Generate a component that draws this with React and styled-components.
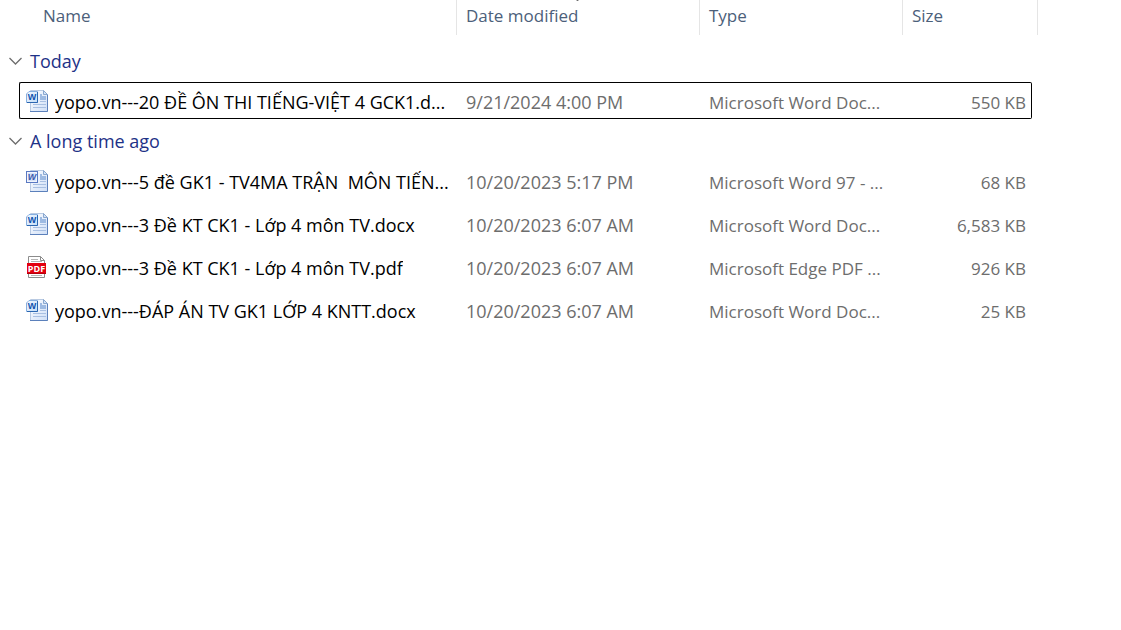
import { useState } from 'react'
import styled, { createGlobalStyle } from 'styled-components'

const columns = [
  { id: 'date', label: 'Date modified', sorted: true },
  { id: 'type', label: 'Type' },
]

const groups = [
  {
    name: 'Today',
    files: [
      { icon: 'docx', name: 'yopo.vn---20 ĐỀ ÔN THI TIẾNG-VIỆT 4 GCK1.d...', date: '9/21/2024 4:00 PM', type: 'Microsoft Word Doc...', size: '550 KB', focused: true },
    ],
  },
  {
    name: 'A long time ago',
    files: [
      { icon: 'doc', name: 'yopo.vn---5 đề GK1 - TV4MA TRẬN  MÔN TIẾN...', date: '10/20/2023 5:17 PM', type: 'Microsoft Word 97 - ...', size: '68 KB' },
      { icon: 'docx', name: 'yopo.vn---3 Đề KT CK1 - Lớp 4 môn TV.docx', date: '10/20/2023 6:07 AM', type: 'Microsoft Word Doc...', size: '6,583 KB' },
      { icon: 'pdf', name: 'yopo.vn---3 Đề KT CK1 - Lớp 4 môn TV.pdf', date: '10/20/2023 6:07 AM', type: 'Microsoft Edge PDF ...', size: '926 KB' },
      { icon: 'docx', name: 'yopo.vn---ĐÁP ÁN TV GK1 LỚP 4 KNTT.docx', date: '10/20/2023 6:07 AM', type: 'Microsoft Word Doc...', size: '25 KB' },
    ],
  },
]

function WordIcon({ old }) {
  return (
    <FileSvg viewBox="0 0 23 23" aria-hidden="true">
      <defs>
        <linearGradient id="page" x1="0" y1="0" x2="1" y2="1">
          <stop offset="0" stopColor="#ffffff" />
          <stop offset="1" stopColor="#cfdff7" />
        </linearGradient>
        <linearGradient id="badge" x1="0" y1="0" x2="1" y2="1">
          <stop offset="0" stopColor="#f4f9ff" />
          <stop offset="1" stopColor="#c3ddf8" />
        </linearGradient>
      </defs>
      <path d="M4.500 .5h13l4 4v17h-17z" fill="url(#page)" stroke="#b9cae2" />
      <path d="M21.500 4.500v17H4" fill="none" stroke="#5b80bb" />
      <path d="M17.500 .5v4h4z" fill="#d4e3f6" stroke="#8aa8d0" />
      <path d="M14 4h2v2h4v4h-6z" fill="#9dbae2" />
      <path d="M14 11.500h6M7 14.500h13M7 17.500h13" stroke="#a9c0e2" />
      {old ? (
        <>
          <rect x="0.5" y="1.5" width="11" height="11" fill="#f1f5fd" stroke="#5a79c2" />
          <rect x="2" y="3" width="8" height="8" fill="#d8e2f7" />
        </>
      ) : (
        <>
          <path d="M3 1.500h8.500v11H.5V4z" fill="url(#badge)" stroke="#86afe0" />
          <path d="M11.500 2v10.500H1" fill="none" stroke="#2c67b1" />
        </>
      )}
      <IconLetter x="6" y="10" fill={old ? '#3c5cae' : '#0f52ad'} $italic={old}>W</IconLetter>
    </FileSvg>
  )
}

function PdfIcon() {
  return (
    <FileSvg viewBox="0 0 23 23" aria-hidden="true">
      <path d="M2.500 8V.5h12l4 4v17h-16V8" fill="#fff" stroke="#8c8c8c" />
      <path d="M14.500 .5v4h4" fill="none" stroke="#8c8c8c" />
      <path d="M5 3.500h7M5 5.500h11M5 19.500h11" stroke="#b5b5b5" />
      <rect x="1" y="7" width="19" height="11" fill="#e3000f" />
      <path d="M1 17.500h19" stroke="#b4000c" />
      <PdfLetters x="10.500" y="16">PDF</PdfLetters>
    </FileSvg>
  )
}

function FileIcon({ kind }) {
  if (kind === 'pdf') {
    return <PdfIcon />
  }
  return <WordIcon old={kind === 'doc'} />
}

function Group({ group }) {
  const [open, setOpen] = useState(true)

  return (
    <tbody>
      <tr>
        <GroupCell colSpan={7} scope="rowgroup">
          <GroupButton type="button" aria-expanded={open} onClick={() => setOpen(!open)}>
            <Chevron viewBox="0 0 13 8" $open={open} aria-hidden="true">
              <path d="M.5 1l6 6 6-6" />
            </Chevron>
            {group.name}
          </GroupButton>
        </GroupCell>
      </tr>
      {open && group.files.map(file => (
        <FileRow key={file.name} $focused={file.focused}>
          <Gutter />
          <Cell>
            <FileName>
              <FileIcon kind={file.icon} />
              <span>{file.name}</span>
            </FileName>
          </Cell>
          <Cell><Detail $large>{file.date}</Detail></Cell>
          <Cell><Detail>{file.type}</Detail></Cell>
          <Cell><Detail $right>{file.size}</Detail></Cell>
          <Gutter />
          <Gutter />
        </FileRow>
      ))}
    </tbody>
  )
}

export default function App() {
  return (
    <>
      <GlobalStyle />
      <FileTable>
        <colgroup>
          <Col $width={19} />
          <Col />
          <Col $width={243} />
          <Col $width={203} />
          <Col $width={129} />
          <Col $width={6} />
          <Col $width={83} />
        </colgroup>
        <thead>
          <tr>
            <HeadCell colSpan={2} scope="col">
              <HeadButton type="button" $first>Name</HeadButton>
            </HeadCell>
            {columns.map(col => (
              <HeadCell key={col.id} scope="col" aria-sort={col.sorted ? 'descending' : undefined}>
                <HeadButton type="button">
                  {col.label}
                  {col.sorted && (
                    <SortArrow viewBox="0 0 9 6" aria-hidden="true">
                      <path d="M.5 1l4 4 4-4" />
                    </SortArrow>
                  )}
                </HeadButton>
              </HeadCell>
            ))}
            <HeadCell colSpan={2} scope="col">
              <HeadButton type="button">Size</HeadButton>
            </HeadCell>
            <Gutter />
          </tr>
        </thead>
        {groups.map(group => <Group key={group.name} group={group} />)}
      </FileTable>
    </>
  )
}

const GlobalStyle = createGlobalStyle`
  body{
    margin: 0;
    background-color: #fff;
    overflow-x: hidden;
  }

  *{
    box-sizing: border-box;
  }

  table, button{
    font-family: "Open Sans", "Noto Sans", sans-serif;
    font-size: 17px;
    font-weight: 400;
    line-height: 24px;
  }
`

/* the negative margin drops the spacing above the header */
const FileTable = styled.table`
  width: 100%;
  margin-top: -6px;
  table-layout: fixed;
  border-collapse: separate;
  border-spacing: 0 6px;
`
const Col = styled.col`
  width: ${props => props.$width ? props.$width + 'px' : 'auto'};
`
const Gutter = styled.td`
  padding: 0;
`
const HeadCell = styled.th`
  height: 39px;
  padding: 0;
  vertical-align: top;
`
const HeadButton = styled.button`
  position: relative;
  display: block;
  width: 100%;
  height: 35px;
  padding: 4px 9px 7px;
  padding-left: ${props => props.$first ? '43px' : '9px'};
  overflow: hidden;
  border: none;
  border-right: 1px solid #e5e5e5;
  background: none;
  color: #4c607a;
  text-align: left;
`
const SortArrow = styled.svg`
  position: absolute;
  top: -5px;
  left: 50%;
  width: 9px;
  height: 6px;
  margin-left: -5px;
  fill: none;
  stroke: #6d6d6d;
  stroke-width: 2px;
`
const GroupCell = styled.th`
  height: 31px;
  padding: 0 0 0 9px;
`
const GroupButton = styled.button`
  display: flex;
  align-items: center;
  gap: 8px;
  padding: 0;
  border: none;
  background: none;
  color: #1e3287;
  font-size: 18px;
`
const Chevron = styled.svg`
  width: 13px;
  height: 8px;
  fill: none;
  stroke: #6d6d6d;
  stroke-width: 1.3;
  transform: ${props => props.$open ? 'none' : 'rotate(-90deg)'};
`
const Cell = styled.td`
  height: 37px;
  padding: 0;
  border: 1px solid transparent;
  border-width: 1px 0;
`
const FileRow = styled.tr`
  ${Cell}{
    border-color: ${props => props.$focused ? '#000' : 'transparent'};
  }

  ${Cell}:nth-child(2){
    border-left-width: 1px;
    border-radius: 2px 0 0 2px;
  }

  ${Cell}:nth-child(5){
    border-right-width: 1px;
    border-radius: 0 2px 2px 0;
  }
`
const FileName = styled.div`
  display: flex;
  align-items: center;
  gap: 6px;
  padding: 2px 0 0 6px;
  color: #000;
  font-size: 18px;
  white-space: pre;

  span{
    padding-top: 1px;
    overflow: hidden;
  }
`
const Detail = styled.div`
  padding: ${props => props.$large ? '3px' : '4px'} 5px 0 9px;
  overflow: hidden;
  color: #6d6d6d;
  font-size: ${props => props.$large ? '18px' : '17px'};
  text-align: ${props => props.$right ? 'right' : 'left'};
  white-space: nowrap;
`
const FileSvg = styled.svg`
  flex: none;
  width: 23px;
  height: 23px;
  fill: none;
`
const IconLetter = styled.text`
  font-family: "Liberation Sans", Arial, sans-serif;
  font-size: 9px;
  font-style: ${props => props.$italic ? 'italic' : 'normal'};
  font-weight: 700;
  text-anchor: middle;
`
const PdfLetters = styled.text`
  fill: #fff;
  font-family: "Open Sans", sans-serif;
  font-size: 9px;
  font-weight: 700;
  text-anchor: middle;
`
